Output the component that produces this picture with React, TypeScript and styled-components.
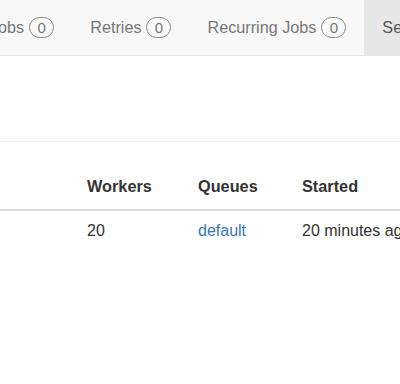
import React from 'react'
import styled, { createGlobalStyle } from 'styled-components'

const GlobalStyle = createGlobalStyle`
    html, body {
        margin: 0;
        padding: 0;
        background: #fff;
    }
    body {
        font-family: "Liberation Sans", Arial, Helvetica, sans-serif;
        font-size: 16px;
        color: #333;
    }
`

const Page = styled.div`
    width: 400px;
    height: 384px;
    overflow: hidden;
    background: #fff;
`

const Navbar = styled.nav`
    height: 55px;
    background: #f8f8f8;
    border-bottom: 1px solid #e7e7e7;
`

const NavList = styled.ul`
    display: flex;
    height: 100%;
    margin: 0 0 0 -28px;
    padding: 0;
    list-style: none;
    white-space: nowrap;
`

const NavItem = styled.li<{ $active?: boolean }>`
    display: flex;
    align-items: center;
    padding: 0 18px;
    color: ${(p) => (p.$active ? '#555' : '#777')};
    background: ${(p) => (p.$active ? '#e7e7e7' : 'transparent')};
    font-size: 16.2px;
`

const Badge = styled.span`
    display: inline-flex;
    align-items: center;
    justify-content: center;
    box-sizing: border-box;
    min-width: 25px;
    height: 21px;
    margin-left: 5px;
    padding: 0 6px;
    border: 1px solid #888;
    border-radius: 11px;
    color: #777;
    font-size: 15px;
`

const Content = styled.div`
    margin-left: -240px;
    width: 1000px;
`

const PageHeader = styled.h1`
    margin: 36px 0 25px;
    height: 40px;
    padding-bottom: 9px;
    border-bottom: 1px solid #eee;
    font-size: 36px;
    font-weight: 500;
    line-height: 40px;
    padding-left: 15px;
`

const Table = styled.table`
    width: 100%;
    table-layout: fixed;
    border-collapse: collapse;
`

const Th = styled.th`
    padding: 8px 8px 11px;
    text-align: left;
    font-weight: bold;
    font-size: 16.3px;
    line-height: 23px;
    vertical-align: bottom;
    border-bottom: 2px solid #ddd;
    white-space: nowrap;
`

const Td = styled.td`
    padding: 8px;
    line-height: 23px;
    white-space: nowrap;
`

const QueueLink = styled.a`
    color: #337ab7;
    text-decoration: none;
`

const navItems = [
    { label: 'Jobs', count: 0 },
    { label: 'Retries', count: 0 },
    { label: 'Recurring Jobs', count: 0 },
]

export default function App() {
    return (
        <Page>
            <GlobalStyle />
            <Navbar>
                <NavList>
                    {navItems.map((item) => (
                        <NavItem key={item.label}>
                            {item.label}
                            <Badge>{item.count}</Badge>
                        </NavItem>
                    ))}
                    <NavItem $active>Servers</NavItem>
                </NavList>
            </Navbar>
            <Content>
                <PageHeader>Servers</PageHeader>
                <Table>
                    <colgroup>
                        <col style={{ width: 319 }} />
                        <col style={{ width: 111 }} />
                        <col style={{ width: 104 }} />
                        <col style={{ width: 170 }} />
                        <col />
                    </colgroup>
                    <thead>
                        <tr>
                            <Th>Name</Th>
                            <Th>Workers</Th>
                            <Th>Queues</Th>
                            <Th>Started</Th>
                            <Th>Heartbeat</Th>
                        </tr>
                    </thead>
                    <tbody>
                        <tr>
                            <Td>worker-01</Td>
                            <Td>20</Td>
                            <Td>
                                <QueueLink href="#">default</QueueLink>
                            </Td>
                            <Td>20 minutes ago</Td>
                            <Td>a few seconds ago</Td>
                        </tr>
                    </tbody>
                </Table>
            </Content>
        </Page>
    )
}
